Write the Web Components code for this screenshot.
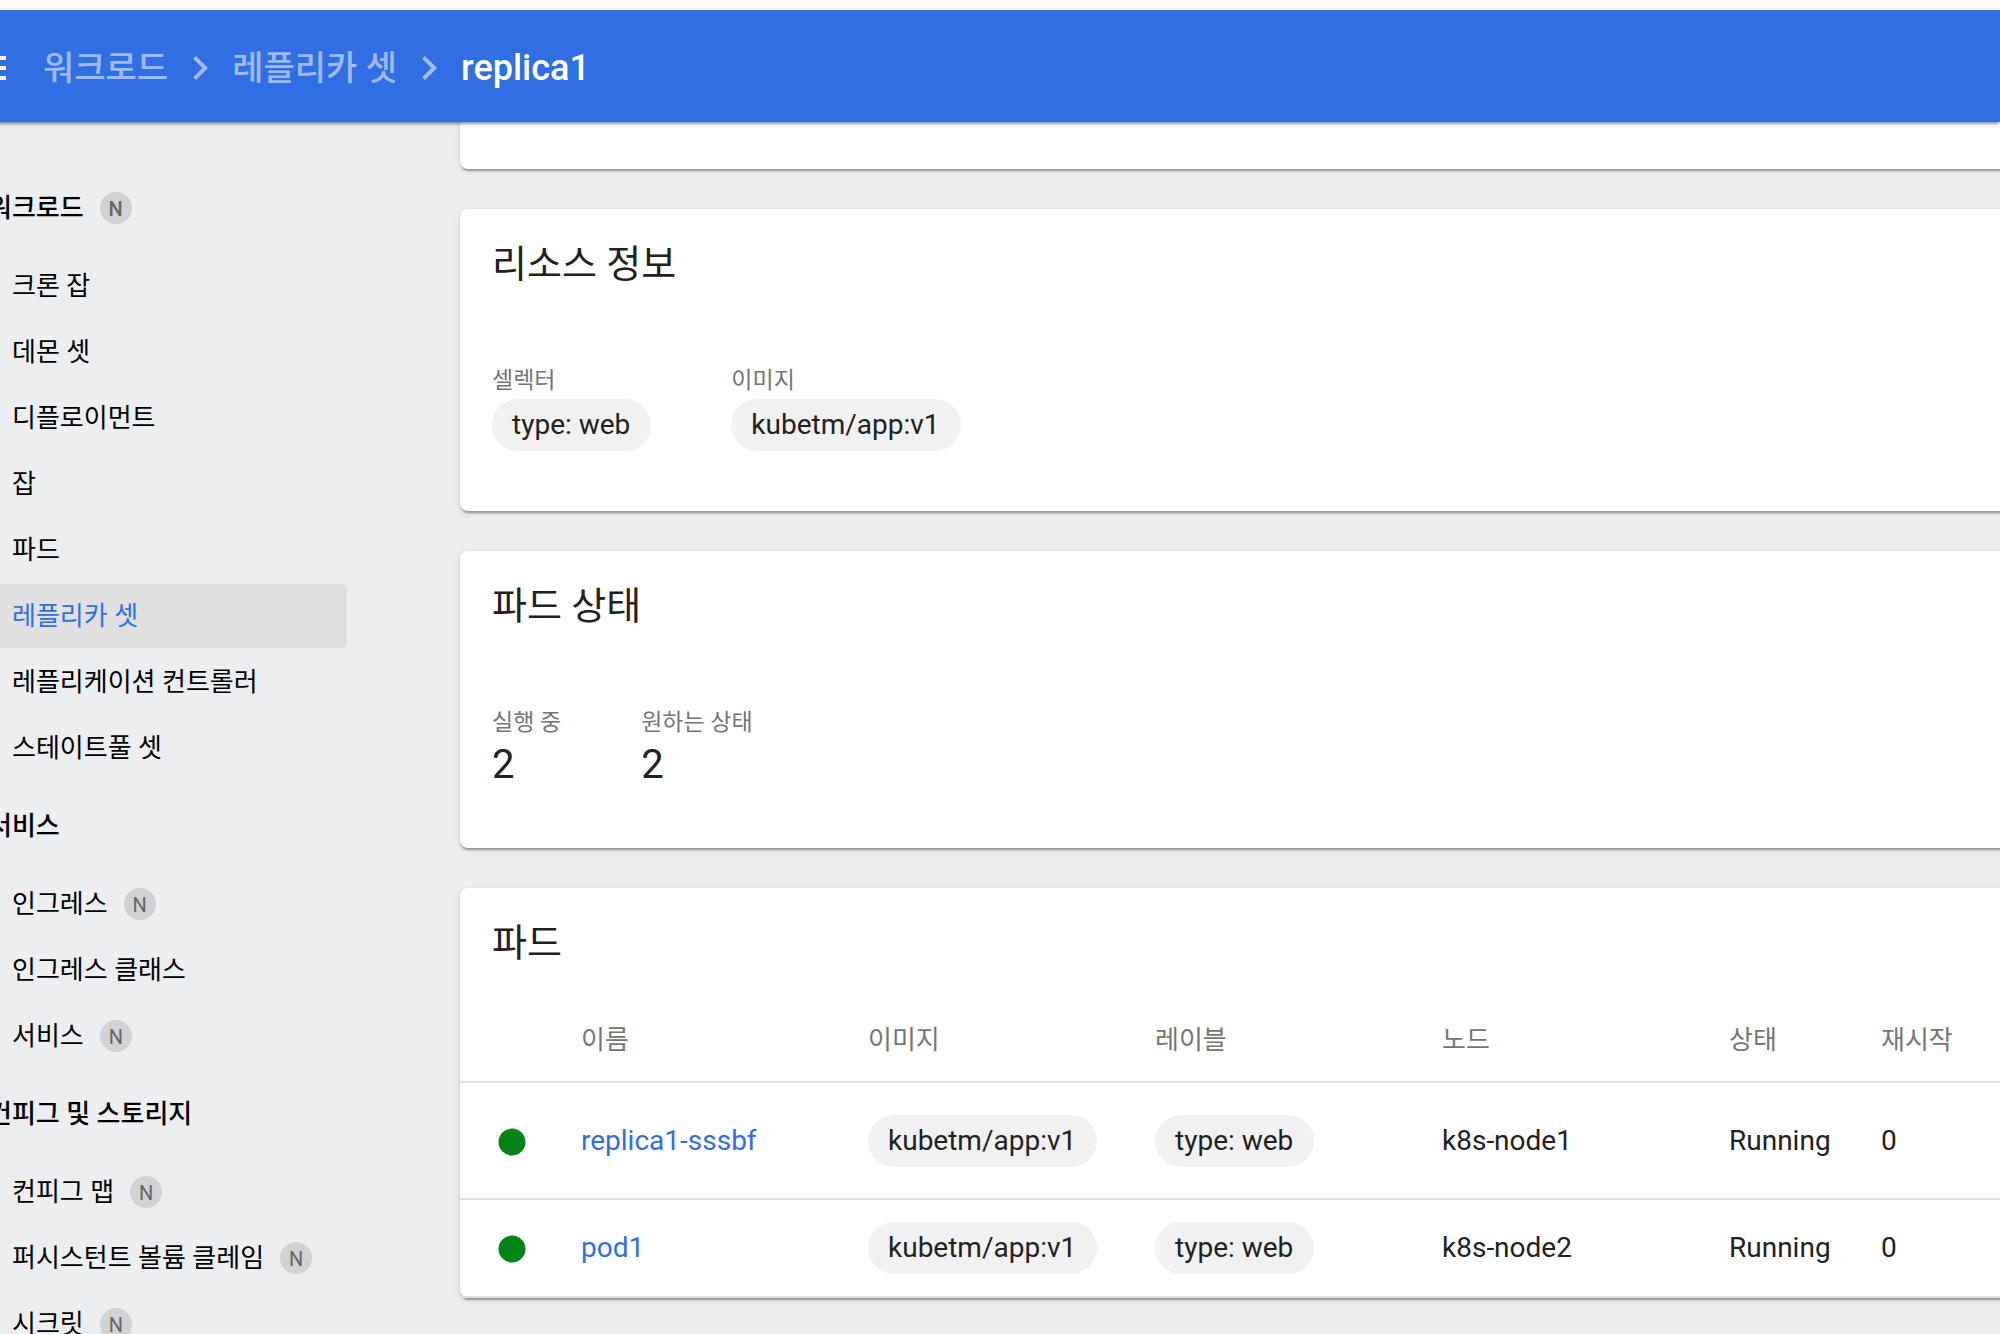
<!DOCTYPE html>
<html lang="ko">
<head>
<meta charset="utf-8">
<title>replica1</title>
<style>
  body {
    margin: 0;
    height: 100vh;
    overflow: hidden;
    background: #edeef0;
    color: #212121;
    font-family: Roboto, "Noto Sans CJK KR", sans-serif;
    --primary: #306ee4;
    --muted: #757575;
    --line: #e0e0e0;
    --shadow: 0 4px 2px -2px rgba(0,0,0,.2), 0 2px 2px rgba(0,0,0,.14), 0 2px 6px rgba(0,0,0,.12);
  }
</style>
</head>
<body>
<kd-app>
  <kd-toolbar slot="toolbar">
    <kd-crumb href="#workloads">워크로드</kd-crumb>
    <kd-crumb href="#replicaset">레플리카 셋</kd-crumb>
    <kd-crumb current>replica1</kd-crumb>
  </kd-toolbar>
  <kd-nav slot="nav">
    <kd-nav-item group badge="N">워크로드</kd-nav-item>
    <kd-nav-item>크론 잡</kd-nav-item>
    <kd-nav-item>데몬 셋</kd-nav-item>
    <kd-nav-item>디플로이먼트</kd-nav-item>
    <kd-nav-item>잡</kd-nav-item>
    <kd-nav-item>파드</kd-nav-item>
    <kd-nav-item selected>레플리카 셋</kd-nav-item>
    <kd-nav-item>레플리케이션 컨트롤러</kd-nav-item>
    <kd-nav-item>스테이트풀 셋</kd-nav-item>
    <kd-nav-item group>서비스</kd-nav-item>
    <kd-nav-item badge="N">인그레스</kd-nav-item>
    <kd-nav-item>인그레스 클래스</kd-nav-item>
    <kd-nav-item badge="N">서비스</kd-nav-item>
    <kd-nav-item group>컨피그 및 스토리지</kd-nav-item>
    <kd-nav-item badge="N">컨피그 맵</kd-nav-item>
    <kd-nav-item badge="N">퍼시스턴트 볼륨 클레임</kd-nav-item>
    <kd-nav-item badge="N">시크릿</kd-nav-item>
  </kd-nav>
  <kd-card></kd-card>
  <kd-card heading="리소스 정보">
    <kd-properties>
      <kd-property label="셀렉터"><kd-chip>type: web</kd-chip></kd-property>
      <kd-property label="이미지"><kd-chip>kubetm/app:v1</kd-chip></kd-property>
    </kd-properties>
  </kd-card>
  <kd-card heading="파드 상태">
    <kd-properties>
      <kd-property label="실행 중">2</kd-property>
      <kd-property label="원하는 상태">2</kd-property>
    </kd-properties>
  </kd-card>
  <kd-card heading="파드">
    <kd-pod-table></kd-pod-table>
  </kd-card>
</kd-app>

<script>
const define = (name, render) => customElements.define(name, class extends HTMLElement {
  connectedCallback() {
    if (this.shadowRoot) return;
    const template = document.createElement('template');
    template.innerHTML = render(this);
    this.attachShadow({ mode: 'open' }).append(template.content.cloneNode(true));
  }
});

define('kd-app', () => `
  <style>
    :host { display: flex; flex-direction: column; height: 100%; padding-top: 10px; box-sizing: border-box; background: linear-gradient(#fafafa 10px, transparent 10px); }
    .body { display: flex; flex: 1; min-height: 0; overflow: hidden; }
    main { flex: 1; min-width: 0; display: flex; flex-direction: column; gap: 40px; margin: -33px -40px 0 113px; }
  </style>
  <slot name="toolbar"></slot>
  <div class="body">
    <slot name="nav"></slot>
    <main><slot></slot></main>
  </div>`);

define('kd-toolbar', () => `
  <style>
    :host { display: flex; align-items: center; height: 112px; padding-top: 4px; box-sizing: border-box; flex: none; margin-left: -36px; gap: 31px; background: var(--primary); color: #fff; box-shadow: var(--shadow); z-index: 1; position: relative; }
    button { all: unset; display: flex; cursor: pointer; }
    svg { width: 48px; height: 48px; fill: currentColor; }
    nav { display: flex; align-items: center; gap: 8px; }
  </style>
  <button aria-label="메뉴"><svg viewBox="0 0 24 24"><path d="M3 18h18v-2H3v2zm0-5h18v-2H3v2zm0-7v2h18V6H3z"/></svg></button>
  <nav><slot></slot></nav>`);

define('kd-crumb', el => `
  <style>
    :host { display: flex; align-items: center; gap: 8px; font-size: 34px; line-height: 48px; font-weight: 500; }
    a, svg { color: rgba(255,255,255,.55); text-decoration: none; }
    span { font-size: 36px; }
    svg { width: 48px; height: 48px; fill: currentColor; }
  </style>
  ${el.hasAttribute('current')
    ? '<span aria-current="page"><slot></slot></span>'
    : `<a href="${el.getAttribute('href')}"><slot></slot></a>
       <svg viewBox="0 0 24 24"><path d="M10 6 8.59 7.41 13.17 12l-4.58 4.59L10 18l6-6z"/></svg>`}`);

define('kd-nav', () => `
  <style>
    :host { display: block; width: 371px; flex: none; margin-left: -24px; padding-top: 42px; box-sizing: border-box; }
  </style>
  <nav><slot></slot></nav>`);

define('kd-nav-item', el => `
  <style>
    :host { display: block; padding-bottom: 2px; color: #000; }
    a { display: flex; align-items: center; gap: 16px; height: 64px; padding-left: 36px; border-radius: 0 6px 6px 0; color: inherit; text-decoration: none; font-size: 26px; line-height: 32px; white-space: nowrap; }
    :host([group]) a { height: 88px; padding-left: 12px; font-weight: 500; }
    :host([selected]) a { background: var(--line); color: var(--primary); }
    .badge { width: 32px; height: 32px; border-radius: 50%; background: #d1d2d4; color: #666; font-size: 20px; line-height: 34px; text-align: center; }
  </style>
  <a href="#"><span><slot></slot></span>${el.hasAttribute('badge') ? `<span class="badge">${el.getAttribute('badge')}</span>` : ''}</a>`);

define('kd-card', el => `
  <style>
    :host { display: block; min-height: 80px; border-radius: 8px; background: #fff; box-shadow: var(--shadow); }
    h2 { margin: 0; padding: 31px 32px 29px; font-size: 38px; line-height: 48px; font-weight: 400; }
  </style>
  ${el.hasAttribute('heading') ? `<h2>${el.getAttribute('heading')}</h2>` : ''}
  <slot></slot>`);

define('kd-properties', () => `
  <style>
    :host { display: flex; gap: 80px; padding: 46px 32px 60px; }
  </style>
  <slot></slot>`);

define('kd-property', el => `
  <style>
    :host { display: block; }
    dl, dd { margin: 0; }
    dt { color: var(--muted); font-size: 23px; line-height: 36px; }
    dd { font-size: 40px; line-height: 47px; }
  </style>
  <dl><dt>${el.getAttribute('label')}</dt><dd><slot></slot></dd></dl>`);

define('kd-chip', () => `
  <style>
    :host { display: block; width: max-content; padding: 0 21px 0 20px; border-radius: 26px; background: #f1f1f1; font-size: 28px; line-height: 52px; }
  </style>
  <slot></slot>`);

const pods = [
  { name: 'replica1-sssbf', node: 'k8s-node1' },
  { name: 'pod1', node: 'k8s-node2' }
];

define('kd-pod-table', () => `
  <style>
    :host { display: block; }
    table { width: 100%; table-layout: fixed; border-collapse: separate; border-spacing: 0; font-size: 28px; line-height: 32px; }
    th, td { padding: 0; text-align: left; border-bottom: 2px solid var(--line); white-space: nowrap; }
    th { height: 83px; padding-top: 2px; color: var(--muted); font-size: 26px; font-weight: 400; }
    td { height: 96px; }
    tbody tr:first-child td { height: 115px; }
    .icon { width: 121px; }
    .wide { width: 287px; }
    .state { width: 152px; }
    a { color: var(--primary); text-decoration: none; }
    svg { display: block; width: 48px; height: 48px; margin-left: 28px; fill: #038216; }
  </style>
  <table>
    <colgroup><col class="icon"><col class="wide"><col class="wide"><col class="wide"><col class="wide"><col class="state"><col></colgroup>
    <thead><tr><th></th><th>이름</th><th>이미지</th><th>레이블</th><th>노드</th><th>상태</th><th>재시작</th></tr></thead>
    <tbody>${pods.map(pod => `
      <tr>
        <td><svg viewBox="0 0 48 48" role="img" aria-label="Running"><circle cx="24" cy="25" r="13.5"/></svg></td>
        <td><a href="#${pod.name}">${pod.name}</a></td>
        <td><kd-chip>kubetm/app:v1</kd-chip></td>
        <td><kd-chip>type: web</kd-chip></td>
        <td>${pod.node}</td>
        <td>Running</td>
        <td>0</td>
      </tr>`).join('')}
    </tbody>
  </table>`);
</script>
</body>
</html>
